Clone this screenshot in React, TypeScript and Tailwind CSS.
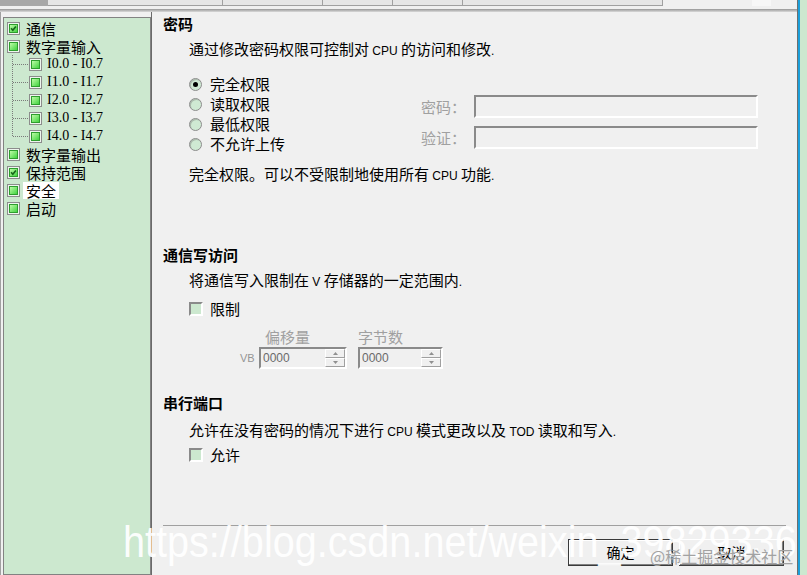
import React from "react";

const CJK = "font-['Noto_Sans_CJK_SC','Noto_Sans',sans-serif]";

function L({ children }: { children: React.ReactNode }) {
  return <span className="font-['Liberation_Sans',sans-serif] text-[12px]">{children}</span>;
}

function TreeCheck({ checked }: { checked?: boolean }) {
  return (
    <svg width="13" height="13" viewBox="0 0 13 13" className="shrink-0">
      <defs>
        <linearGradient id="tcg" x1="0" y1="0" x2="1" y2="1">
          <stop offset="0" stopColor="#c6ffae" />
          <stop offset="1" stopColor="#38d038" />
        </linearGradient>
      </defs>
      <rect x="0.5" y="0.5" width="12" height="12" fill="#eef6ee" stroke="#8c8c8c" />
      <rect x="2.5" y="2.5" width="8" height="8" fill="url(#tcg)" stroke="#2e9e2e" />
      {checked && (
        <path d="M4.1 6.3 L5.8 8.3 L8.9 4.5" fill="none" stroke="#17651a" strokeWidth="1.6" />
      )}
    </svg>
  );
}

function Connector({ last }: { last?: boolean }) {
  return (
    <svg width="22" height="18" viewBox="0 0 22 18" className="shrink-0">
      <line x1="5.5" y1="0" x2="5.5" y2={last ? 9.5 : 18} stroke="#7a7a7a" strokeDasharray="1 1" />
      <line x1="6" y1="9.5" x2="22" y2="9.5" stroke="#7a7a7a" strokeDasharray="1 1" />
    </svg>
  );
}

function TreeRow({ label, checked, selected }: { label: string; checked?: boolean; selected?: boolean }) {
  return (
    <div className="flex h-[18px] items-center">
      <TreeCheck checked={checked} />
      <span
        className={`ml-[3px] px-[3px] text-[15px] leading-[17px] text-black ${selected ? "bg-white" : ""}`}
      >
        {label}
      </span>
    </div>
  );
}

function ChildRow({ label, last }: { label: string; last?: boolean }) {
  return (
    <div className="flex h-[18px] items-center">
      <Connector last={last} />
      <TreeCheck />
      <span className="ml-[5px] font-['Liberation_Serif',serif] text-[14px] leading-[18px] text-black">
        {label}
      </span>
    </div>
  );
}

function Radio({ label, on }: { label: string; on?: boolean }) {
  return (
    <div className="flex h-[20px] items-center gap-[8px]">
      <div className="flex h-[13px] w-[13px] items-center justify-center rounded-full border border-[#8d8d8d] bg-[#cfe9d3] shadow-[inset_1px_1px_0_#a9b8ab]">
        {on && <div className="h-[5px] w-[5px] rounded-full bg-black" />}
      </div>
      <span className="text-[15px] leading-[18px]">{label}</span>
    </div>
  );
}

function Field({ label }: { label: string }) {
  return (
    <div className="flex h-[23px] items-center">
      <span className="w-[53px] text-[15px] leading-[18px] text-[#a0a0a0]">{label}</span>
      <div className="h-[23px] w-[284px] border-2 border-t-[#8a8a8a] border-l-[#8a8a8a] border-b-white border-r-white bg-[#f0f0f0]" />
    </div>
  );
}

function CheckBox({ label }: { label: string }) {
  return (
    <div className="flex h-[18px] items-center gap-[7px]">
      <div className="h-[14px] w-[14px] border-2 border-t-[#8a8a8a] border-l-[#8a8a8a] border-b-white border-r-white bg-[#cce8cf]" />
      <span className="text-[15px] leading-[18px]">{label}</span>
    </div>
  );
}

function SpinBtn({ up }: { up?: boolean }) {
  return (
    <div className="flex flex-1 items-center justify-center border border-t-white border-l-white border-b-[#a0a0a0] border-r-[#a0a0a0] bg-[#f0f0f0]">
      <svg width="5" height="3" viewBox="0 0 5 3">
        {up ? <path d="M0 3 L2.5 0 L5 3 Z" fill="#909090" /> : <path d="M0 0 L2.5 3 L5 0 Z" fill="#909090" />}
      </svg>
    </div>
  );
}

function Spinner({ w }: { w: string }) {
  return (
    <div className={`${w} flex h-[22px] border-2 border-t-[#8a8a8a] border-l-[#8a8a8a] border-b-white border-r-white bg-[#f0f0f0]`}>
      <span className="flex-1 pl-[2px] font-['Liberation_Sans',sans-serif] text-[12px] leading-[18px] text-[#6a6a6a]">
        0000
      </span>
      <div className="flex w-[20px] flex-col">
        <SpinBtn up />
        <SpinBtn />
      </div>
    </div>
  );
}

export default function App() {
  return (
    <div className={`relative flex h-[575px] w-[807px] overflow-hidden bg-[#f0f0f0] text-black ${CJK}`}>
      <div className="flex w-[797px] flex-col">
        {/* tab strip */}
        <div className="flex h-[6px]">
          <div className="w-[48px] bg-[#a8a8a8]" />
          <div className="w-[174px] border-b border-[#a0a0a0] bg-[#e6e6e6]" />
          <div className="w-[100px] border-b border-l border-[#a0a0a0] bg-[#e6e6e6]" />
          <div className="w-[70px] border-b border-l border-[#a0a0a0] bg-[#e6e6e6]" />
          <div className="w-[70px] border-b border-l border-[#a0a0a0] bg-[#e6e6e6]" />
          <div className="w-[201px] border-b border-l border-r border-[#a0a0a0] bg-[#e6e6e6]" />
          <div className="w-[89px]" />
          <div className="w-[19px] bg-[#f7f7f7]" />
        </div>
        <div className="h-[3px]" />
        <div className="h-[3px] bg-gradient-to-b from-[#969696] to-[#dadada]" />

        {/* body */}
        <div className="flex flex-1">
          <div className="flex border-l border-[#a0a0a0] pl-[2px]">
            <div className="mt-[5px] w-[148px] border border-[#828282] bg-[#cce8cf] pl-[3px] pt-[1px]">
              <TreeRow label="通信" checked />
              <TreeRow label="数字量输入" />
              <ChildRow label="I0.0 - I0.7" />
              <ChildRow label="I1.0 - I1.7" />
              <ChildRow label="I2.0 - I2.7" />
              <ChildRow label="I3.0 - I3.7" />
              <ChildRow label="I4.0 - I4.7" last />
              <TreeRow label="数字量输出" />
              <TreeRow label="保持范围" checked />
              <TreeRow label="安全" selected />
              <TreeRow label="启动" />
            </div>
          </div>

          <div className="flex flex-1 flex-col border-l border-[#6a6a6a] pl-[11px] pr-[11px]">
            <div className="mt-[3px] h-[18px] text-[15px] font-bold leading-[18px]">密码</div>
            <div className="ml-[26px] mt-[7px] h-[18px] whitespace-nowrap text-[15px] leading-[18px]">
              通过修改密码权限可控制对<L> CPU </L>的访问和修改<L>.</L>
            </div>
            <div className="ml-[26px] mt-[16px] flex">
              <div className="flex w-[232px] flex-col">
                <Radio label="完全权限" on />
                <Radio label="读取权限" />
                <Radio label="最低权限" />
                <Radio label="不允许上传" />
              </div>
              <div className="mt-[21px] flex flex-col gap-[8px]">
                <Field label="密码：" />
                <Field label="验证：" />
              </div>
            </div>
            <div className="ml-[26px] mt-[11px] h-[18px] whitespace-nowrap text-[15px] leading-[18px]">
              完全权限。可以不受限制地使用所有<L> CPU </L>功能<L>.</L>
            </div>

            <div className="mt-[63px] h-[18px] text-[15px] font-bold leading-[18px]">通信写访问</div>
            <div className="ml-[26px] mt-[7px] h-[18px] whitespace-nowrap text-[15px] leading-[18px]">
              将通信写入限制在<L> V </L>存储器的一定范围内<L>.</L>
            </div>
            <div className="ml-[26px] mt-[11px]">
              <CheckBox label="限制" />
            </div>
            <div className="mt-[10px] flex h-[18px] pl-[102px] text-[15px] leading-[18px] text-[#a0a0a0]">
              <span>偏移量</span>
              <span className="ml-[48px]">字节数</span>
            </div>
            <div className="mt-[1px] flex items-center pl-[77px]">
              <span className="w-[19px] font-['Liberation_Sans',sans-serif] text-[11px] text-[#959595]">VB</span>
              <Spinner w="w-[88px]" />
              <div className="w-[11px]" />
              <Spinner w="w-[85px]" />
            </div>

            <div className="mt-[25px] h-[18px] text-[15px] font-bold leading-[18px]">串行端口</div>
            <div className="ml-[26px] mt-[9px] h-[18px] whitespace-nowrap text-[15px] leading-[18px]">
              允许在没有密码的情况下进行<L> CPU </L>模式更改以及<L> TOD </L>读取和写入<L>.</L>
            </div>
            <div className="ml-[26px] mt-[7px]">
              <CheckBox label="允许" />
            </div>

            <div className="mt-auto h-px bg-[#a0a0a0]" />
            <div className="mb-[9px] mr-[2px] mt-[13px] flex justify-end gap-[6px]">
              <button className="flex h-[27px] w-[105px] items-center justify-center border border-[#3a3a3a] bg-[#f0f0f0] text-[14px] shadow-[inset_-1px_-1px_0_#808080,inset_1px_1px_0_#ffffff]">
                确定
              </button>
              <button className="flex h-[27px] w-[105px] items-center justify-center bg-[#f0f0f0] text-[14px] shadow-[inset_-1px_-1px_0_#404040,inset_1px_1px_0_#ffffff,inset_-2px_-2px_0_#808080]">
                取消
              </button>
            </div>
          </div>
        </div>
      </div>

      {/* right edge */}
      <div className="flex w-[10px]">
        <div className="w-px bg-[#6e6e6e]" />
        <div className="w-[2px] bg-[#1c9fd9]" />
        <div className="flex-1 bg-[#cce8cf]" />
      </div>

      {/* watermarks */}
      <div className="pointer-events-none absolute left-[123px] top-[519px] origin-left scale-x-[0.88] whitespace-nowrap font-['Liberation_Sans',sans-serif] text-[45px] leading-none text-white/95">
        https://blog.csdn.net/weixin_39829336
      </div>
      <div className="pointer-events-none absolute left-[650px] top-[548px] whitespace-nowrap text-[16px] leading-none text-[#a2a2a2]">
        @稀土掘金技术社区
      </div>
    </div>
  );
}
